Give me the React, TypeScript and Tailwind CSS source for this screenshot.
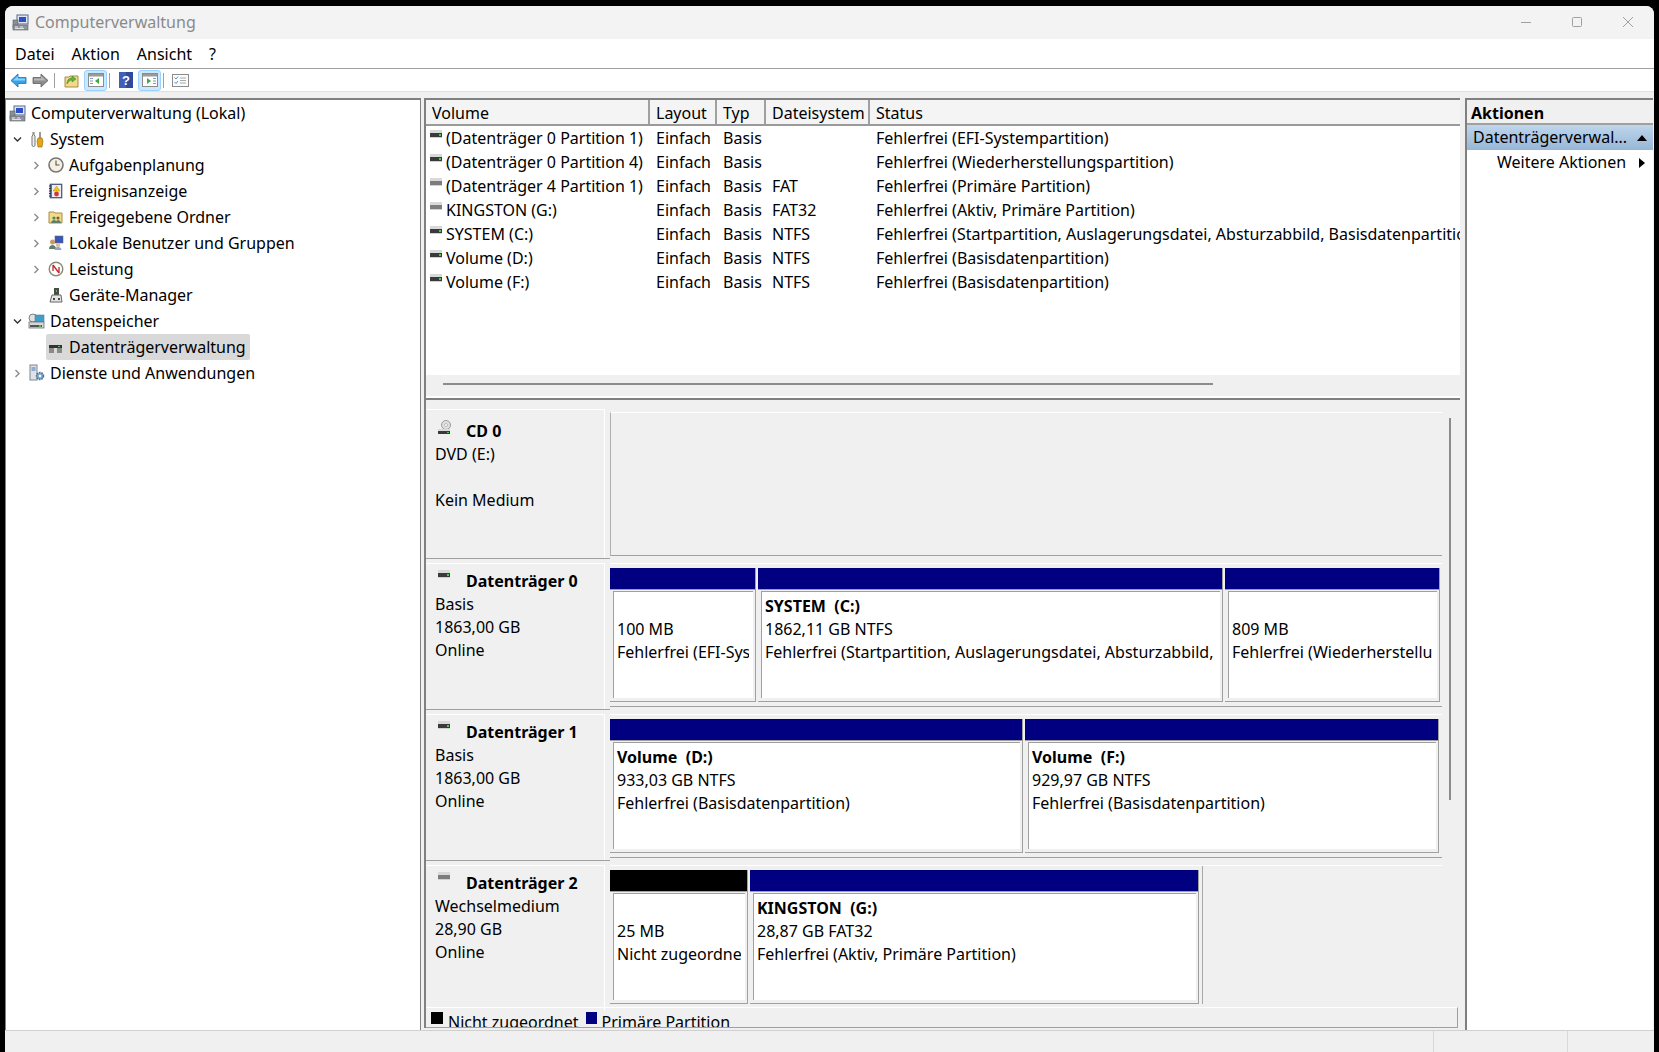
import type { ReactNode } from "react";

function Chevron({ open }: { open?: boolean }) {
  return (
    <svg width="9" height="9" viewBox="0 0 9 9" fill="none" stroke={open ? "#333" : "#8a8a8a"} strokeWidth="1.4">
      {open ? <path d="M1 2.500 4.500 6 8 2.500" /> : <path d="M2.500 1 6 4.500 2.500 8" />}
    </svg>
  );
}

function ComputerIcon() {
  return (
    <svg width="17" height="17" viewBox="0 0 17 17">
      <rect x="5" y="1" width="11" height="9" fill="#dfe6f2" stroke="#5a6a8a" />
      <rect x="7" y="3" width="7" height="5" fill="#2f4fc8" />
      <rect x="1" y="6" width="5" height="8" fill="#8a8f96" stroke="#5c6066" strokeWidth=".6" />
      <rect x="1" y="11" width="15" height="5" fill="#8f959c" stroke="#5c6066" strokeWidth=".6" />
      <path d="M3 13h3M8 13h3M3 14.600h9" stroke="#e6e8ea" />
    </svg>
  );
}
function ToolsIcon() {
  return (
    <svg width="14" height="17" viewBox="0 0 14 17">
      <path d="M3 1v3l-1 1v9a1.500 1.500 0 0 0 3 0V5L4 4V1" fill="#eef0f2" stroke="#777" />
      <rect x="9" y="1" width="2" height="6" fill="#9a9a9a" />
      <path d="M8 7h4l1 3-1 6H8l-1-6z" fill="#e5a711" stroke="#8a6510" strokeWidth=".6" />
    </svg>
  );
}
function ClockIcon() {
  return (
    <svg width="16" height="16" viewBox="0 0 16 16">
      <circle cx="8" cy="8" r="7" fill="#f5f0e2" stroke="#777" strokeWidth="1.600" />
      <path d="M8 3.500V8h3.500" fill="none" stroke="#555" strokeWidth="1.100" />
    </svg>
  );
}
function EventIcon() {
  return (
    <svg width="15" height="16" viewBox="0 0 15 16">
      <rect x="2" y="1" width="12" height="14" fill="#5a6ea0" stroke="#39456a" strokeWidth=".6" />
      <rect x="4" y="2" width="9" height="12" fill="#eceff4" />
      <path d="M8.500 3 12 8H5z" fill="#f0c419" stroke="#a8860f" strokeWidth=".4" />
      <circle cx="8.500" cy="11" r="2.400" fill="#d23a3a" />
      <path d="M1 3h2M1 5.500h2M1 8h2M1 10.500h2M1 13h2" stroke="#333" />
    </svg>
  );
}
function SharedIcon() {
  return (
    <svg width="16" height="16" viewBox="0 0 16 16">
      <path d="M1 3h5l1 1h7v10H1z" fill="#f2d98c" stroke="#a88d45" />
      <circle cx="6" cy="9" r="1.600" fill="#3f8f5a" />
      <circle cx="10" cy="9" r="1.600" fill="#8a5a2a" />
      <path d="M3 14c0-2 2-3 3-3s3 1 3 3zM8 14c0-2 1-3 2-3s3 1 3 3z" fill="#5e7f6a" />
    </svg>
  );
}
function UsersIcon() {
  return (
    <svg width="16" height="16" viewBox="0 0 16 16">
      <rect x="7" y="1" width="8" height="7" fill="#3a55b8" stroke="#667" strokeWidth=".6" />
      <circle cx="4.500" cy="7" r="2.500" fill="#c89a6a" />
      <path d="M1 14c0-3 2-4 3.500-4S8 11 8 14z" fill="#5e7f6a" />
      <circle cx="10" cy="10" r="2.200" fill="#d8c0a0" />
      <path d="M6.500 15c0-2 1.500-3 3.500-3s3.500 1 3.500 3z" fill="#8fa6c8" />
    </svg>
  );
}
function PerfIcon() {
  return (
    <svg width="16" height="16" viewBox="0 0 16 16">
      <circle cx="8" cy="8" r="6.800" fill="#fff" stroke="#8a8a7a" strokeWidth="1.400" />
      <path d="M5 4 11 12M5 4v6M11 12V6" fill="none" stroke="#c8242c" strokeWidth="1.300" />
    </svg>
  );
}
function DeviceIcon() {
  return (
    <svg width="14" height="16" viewBox="0 0 14 16">
      <rect x="5" y="1" width="5" height="7" fill="#4a4a4a" />
      <rect x="7" y="3" width="1" height="2" fill="#4fc04f" />
      <path d="M3 8h9l1 7H1z" fill="#e4e4e4" stroke="#666" />
      <path d="M4 11h2v2H4zM9 11h2v2H9z" fill="#444" />
    </svg>
  );
}
function StorageIcon() {
  return (
    <svg width="17" height="16" viewBox="0 0 17 16">
      <circle cx="5" cy="5" r="4" fill="#dfe3e6" stroke="#7a8288" />
      <rect x="7" y="2" width="9" height="7" fill="#3f9fc8" stroke="#5f7f90" strokeWidth=".6" />
      <rect x="1" y="9" width="15" height="6" fill="#d5d8da" stroke="#6a7074" strokeWidth=".8" />
      <rect x="2" y="12" width="12" height="2" fill="#555" />
      <rect x="11" y="12" width="2" height="2" fill="#4fc04f" />
    </svg>
  );
}
function DiskMgmtIcon() {
  return (
    <svg width="15" height="13" viewBox="0 0 15 13">
      <rect x="1" y="1" width="13" height="3" fill="#d8d8d8" />
      <rect x="1" y="4" width="13" height="3" fill="#333" />
      <rect x="10" y="5" width="2" height="1" fill="#55d055" />
      <rect x="1" y="7" width="5" height="5" fill="#8a8a8a" />
      <rect x="9" y="7" width="5" height="5" fill="#8a8a8a" />
    </svg>
  );
}
function ServicesIcon() {
  return (
    <svg width="16" height="18" viewBox="0 0 16 18">
      <rect x="1" y="1" width="7" height="15" fill="#dfe3e8" stroke="#7c8694" />
      <path d="M2.500 4h4M2.500 6h4" stroke="#3f73b8" />
      <circle cx="11" cy="12" r="3.500" fill="#7fa8d0" stroke="#4c6f96" strokeWidth="1.500" strokeDasharray="1.500 1" />
      <circle cx="11" cy="12" r="1.200" fill="#fff" />
    </svg>
  );
}

function DiskIcon({ online = true }: { online?: boolean }) {
  return (
    <svg width="14" height="9" viewBox="0 0 14 9" className="shrink-0">
      <rect x="1" y="0" width="12" height="3" fill="#d9d9d9" />
      <rect x="1" y="3" width="12" height="4" fill={online ? "#3a3a3a" : "#7d7d7d"} />
      {online && <rect x="10" y="4" width="2" height="2" fill="#43d043" />}
      <rect x="1" y="7" width="12" height="1" fill="#d0d0d0" />
    </svg>
  );
}

function CdIcon() {
  return (
    <svg width="15" height="16" viewBox="0 0 15 16">
      <circle cx="9" cy="5" r="4.500" fill="#e0e0e0" stroke="#9a9a9a" />
      <circle cx="9" cy="5" r="1.500" fill="#fff" stroke="#999" strokeWidth=".6" />
      <rect x="1" y="9" width="12" height="2" fill="#d9d9d9" />
      <rect x="1" y="11" width="12" height="3" fill="#3a3a3a" />
      <rect x="10" y="12" width="2" height="1" fill="#43d043" />
    </svg>
  );
}

function BackArrow() {
  return (
    <svg width="17" height="15" viewBox="0 0 17 15">
      <path d="M8 1 1 7.500 8 14v-3.500h8v-6H8z" fill="#35a3e8" stroke="#1e6fb0" strokeWidth=".8" />
      <path d="M8 3 3 7.500h12V5.500H8z" fill="#8fd2f8" />
    </svg>
  );
}
function ForwardArrow() {
  return (
    <svg width="17" height="15" viewBox="0 0 17 15">
      <path d="M9 1l7 6.500L9 14v-3.500H1v-6h8z" fill="#8c8c8c" stroke="#5f5f5f" strokeWidth=".8" />
      <path d="M9 3l5 4.500H2V5.500h7z" fill="#b8b8b8" />
    </svg>
  );
}
function FolderUp() {
  return (
    <svg width="15" height="15" viewBox="0 0 15 15">
      <path d="M1 4h4l1-1h8v11H1z" fill="#f2d98c" stroke="#a88d45" />
      <path d="M3 11c0-4 2-6 5-6V3l4 3-4 3V7C6 7 5 8 3 11z" fill="#5cb83a" stroke="#35801f" strokeWidth=".5" />
    </svg>
  );
}
function PaneIcon({ arrow }: { arrow: "left" | "right" }) {
  return (
    <svg width="16" height="14" viewBox="0 0 16 14">
      <rect x=".5" y=".5" width="15" height="13" fill="#fff" stroke="#8c8c8c" />
      <rect x="1" y="1" width="14" height="2.500" fill="#9a9a9a" />
      {arrow === "left" ? (
        <>
          <path d="M2 5.500h3M2 8h3M2 10.500h3" stroke="#7c9cc0" />
          <path d="M11 5v6L7 8z" fill="#3fa83f" />
        </>
      ) : (
        <>
          <path d="M11 5.500h3M11 8h3M11 10.500h3" stroke="#7c9cc0" />
          <path d="M5 5v6l4-3z" fill="#3fa83f" />
        </>
      )}
    </svg>
  );
}
function HelpIcon() {
  return (
    <svg width="14" height="16" viewBox="0 0 14 16">
      <rect width="14" height="16" fill="#2f4a9c" />
      <rect width="7" height="16" fill="#3f5fb8" />
      <text x="7" y="13" textAnchor="middle" fontSize="13" fontWeight="700" fill="#fff" fontFamily="Liberation Sans, sans-serif">?</text>
    </svg>
  );
}
function ListIcon() {
  return (
    <svg width="17" height="13" viewBox="0 0 17 13">
      <rect x=".5" y=".5" width="16" height="12" fill="#fbfbfb" stroke="#8c8c8c" />
      <path d="M2.500 3.500 4 5l2-2.500M2.500 8 4 9.500 6 7" fill="none" stroke="#5f8fc0" />
      <path d="M8 4h6M8 6.500h6M8 9h6" stroke="#aaa" />
    </svg>
  );
}

function TreeRow({ level, chev, icon, label, selected }: { level: 0 | 1 | 2; chev?: "open" | "closed"; icon: ReactNode; label: string; selected?: boolean }) {
  return (
    <div className={`flex h-[26px] items-center ${level === 0 ? "pl-[2px]" : level === 1 ? "pl-[2px]" : "pl-[21px]"}`}>
      {level > 0 && (
        <span className="flex w-[19px] shrink-0 justify-center">
          {chev && <Chevron open={chev === "open"} />}
        </span>
      )}
      <span className={`flex h-[26px] items-center rounded-[2px] pr-[4px] ${selected ? "bg-[#d9d9d9]" : ""}`}>
        <span className="flex w-[19px] shrink-0 items-center justify-center">{icon}</span>
        <span className="ml-[4px] whitespace-nowrap">{label}</span>
      </span>
    </div>
  );
}

const columns = ["w-[224px]", "w-[67px]", "w-[49px]", "w-[104px]"];

const volumes = [
  { name: "(Datenträger 0 Partition 1)", fs: "", status: "Fehlerfrei (EFI-Systempartition)", online: true },
  { name: "(Datenträger 0 Partition 4)", fs: "", status: "Fehlerfrei (Wiederherstellungspartition)", online: true },
  { name: "(Datenträger 4 Partition 1)", fs: "FAT", status: "Fehlerfrei (Primäre Partition)", online: false },
  { name: "KINGSTON (G:)", fs: "FAT32", status: "Fehlerfrei (Aktiv, Primäre Partition)", online: false },
  { name: "SYSTEM (C:)", fs: "NTFS", status: "Fehlerfrei (Startpartition, Auslagerungsdatei, Absturzabbild, Basisdatenpartition)", online: true },
  { name: "Volume (D:)", fs: "NTFS", status: "Fehlerfrei (Basisdatenpartition)", online: true },
  { name: "Volume (F:)", fs: "NTFS", status: "Fehlerfrei (Basisdatenpartition)", online: true },
];

function Partition({ width, title, size, status, unallocated }: { width: string; title?: string; size: string; status: string; unallocated?: boolean }) {
  return (
    <div className={`${width} mr-[2px] flex h-[134px] shrink-0 flex-col border-r border-b border-[#a0a0a0]`}>
      <div className={`h-[21px] shrink-0 ${unallocated ? "bg-black" : "bg-[#000080]"}`} />
      <div className="h-[2px] shrink-0 border-t border-[#a0a0a0]" />
      <div className="mr-[2px] ml-[3px] h-[107px] shrink-0 overflow-hidden border-t border-l border-[#a0a0a0] bg-white pt-[3px] pr-[4px] pl-[3px] leading-[23px]">
        <div className="h-[23px] font-bold whitespace-pre">{title}</div>
        <div className="h-[23px] whitespace-nowrap">{size}</div>
        <div className="h-[23px] overflow-hidden whitespace-nowrap">{status}</div>
      </div>
    </div>
  );
}

function DiskRow({ height, name, icon, lines, top, children, noLine }: { height: string; name: string; icon: ReactNode; lines: string[]; top?: boolean; children: ReactNode; noLine?: boolean }) {
  return (
    <div className={`flex ${height} shrink-0`}>
      <div className={`w-[184px] shrink-0 ${noLine ? "" : "border-b border-[#a0a0a0]"}`}>
        <div className={`border-t border-r border-white ${top ? "mt-[9px] mr-[5px] h-[149px] pt-[10px]" : "mt-[4px] mr-[5px] h-[146px] pt-[6px]"}`}>
          <div className="flex h-[23px] items-start">
            <span className="ml-[11px] flex w-[29px] shrink-0 items-start">{icon}</span>
            <span className="h-[23px] font-bold">{name}</span>
          </div>
          {lines.map((l, i) => (
            <div key={i} className="h-[23px] pl-[9px] whitespace-nowrap">{l}</div>
          ))}
        </div>
      </div>
      <div className={`mb-[3px] w-[832px] shrink-0 ${noLine ? "" : "border-b border-[#a0a0a0]"}`}>
        <div className={`border-t border-white pt-[4px] ${top ? "mt-[12px] h-[144px] border-l border-l-[#b0b0b0]" : "mt-[4px]"}`}>
          {children}
        </div>
      </div>
    </div>
  );
}

export default function App() {
  return (
    <div className="h-[1052px] w-[1659px] overflow-hidden bg-black pt-[6px] pr-[5px] pl-[5px] font-['Noto_Sans',sans-serif] text-[16px] leading-[23px] text-black">
      <div className="flex h-full flex-col overflow-hidden rounded-t-[8px] bg-[#f0f0f0]">
        {/* title bar */}
        <div className="flex h-[33px] shrink-0 items-center bg-[#f3f3f3] pl-[7px] text-[#8a8a8a]">
          <ComputerIcon />
          <span className="ml-[6px]">Computerverwaltung</span>
          <div className="mb-[1px] ml-auto flex items-center">
            <svg width="12" height="12" viewBox="0 0 12 12" className="mr-[39px]"><path d="M1 6.500h10" stroke="#a0a0a0" /></svg>
            <svg width="12" height="12" viewBox="0 0 12 12" className="mr-[39px]"><rect x="1.500" y="1.500" width="9" height="9" rx="1" fill="none" stroke="#a0a0a0" /></svg>
            <svg width="12" height="12" viewBox="0 0 12 12" className="mr-[20px]"><path d="M1 1l10 10M11 1 1 11" stroke="#a0a0a0" /></svg>
          </div>
        </div>
        {/* menu */}
        <div className="flex h-[30px] shrink-0 items-center gap-[17px] border-b border-[#a0a0a0] bg-white pt-[2px] pl-[10px]">
          <span>Datei</span>
          <span>Aktion</span>
          <span>Ansicht</span>
          <span>?</span>
        </div>
        {/* toolbar */}
        <div className="flex h-[23px] shrink-0 items-center border-b border-[#e0e0e0] bg-white pl-[5px]">
          <BackArrow />
          <span className="ml-[5px]"><ForwardArrow /></span>
          <span className="mx-[5px] h-[15px] w-px bg-[#a0a0a0]" />
          <span className="ml-[4px]"><FolderUp /></span>
          <span className="ml-[5px] flex h-[21px] w-[23px] items-center justify-center rounded-[3px] border border-[#99d1ff] bg-[#cce8ff]"><PaneIcon arrow="left" /></span>
          <span className="mx-[2px] h-[15px] w-px bg-[#a0a0a0]" />
          <span className="ml-[7px]"><HelpIcon /></span>
          <span className="ml-[5px] flex h-[21px] w-[23px] items-center justify-center rounded-[3px] border border-[#99d1ff] bg-[#cce8ff]"><PaneIcon arrow="right" /></span>
          <span className="mx-[2px] h-[15px] w-px bg-[#a0a0a0]" />
          <span className="ml-[6px]"><ListIcon /></span>
        </div>
        {/* panes */}
        <div className="mt-[6px] flex min-h-0 flex-1 items-start">
          {/* tree */}
          <div className="h-[932px] w-[416px] shrink-0 border-t-2 border-r border-l border-[#808080] bg-white">
            <TreeRow level={0} icon={<ComputerIcon />} label="Computerverwaltung (Lokal)" />
            <TreeRow level={1} chev="open" icon={<ToolsIcon />} label="System" />
            <TreeRow level={2} chev="closed" icon={<ClockIcon />} label="Aufgabenplanung" />
            <TreeRow level={2} chev="closed" icon={<EventIcon />} label="Ereignisanzeige" />
            <TreeRow level={2} chev="closed" icon={<SharedIcon />} label="Freigegebene Ordner" />
            <TreeRow level={2} chev="closed" icon={<UsersIcon />} label="Lokale Benutzer und Gruppen" />
            <TreeRow level={2} chev="closed" icon={<PerfIcon />} label="Leistung" />
            <TreeRow level={2} icon={<DeviceIcon />} label="Geräte-Manager" />
            <TreeRow level={1} chev="open" icon={<StorageIcon />} label="Datenspeicher" />
            <TreeRow level={2} icon={<DiskMgmtIcon />} label="Datenträgerverwaltung" selected />
            <TreeRow level={1} chev="closed" icon={<ServicesIcon />} label="Dienste und Anwendungen" />
          </div>
          {/* middle */}
          <div className="ml-[3px] flex h-[930px] w-[1036px] shrink-0 flex-col border-l-2 border-[#808080]">
            {/* volume list */}
            <div className="h-[302px] shrink-0 border-t-2 border-b-2 border-[#808080] bg-white">
              <div className="flex h-[26px] border-b-2 border-[#9a9a9a] bg-[#f4f4f4]">
                {["Volume", "Layout", "Typ", "Dateisystem"].map((h, i) => (
                  <div key={h} className={`${columns[i]} shrink-0 border-r-2 border-[#a0a0a0] pl-[6px] leading-[27px]`}>{h}</div>
                ))}
                <div className="pl-[6px] leading-[27px]">Status</div>
              </div>
              <div className="h-[249px] overflow-hidden">
                {volumes.map((v) => (
                  <div key={v.name} className="flex h-[24px] items-center">
                    <div className={`${columns[0]} flex shrink-0 items-center pl-[3px] whitespace-nowrap`}>
                      <span className="mr-[3px] -mt-[7px]"><DiskIcon online={v.online} /></span>
                      {v.name}
                    </div>
                    <div className={`${columns[1]} shrink-0 pl-[6px]`}>Einfach</div>
                    <div className={`${columns[2]} shrink-0 pl-[6px]`}>Basis</div>
                    <div className={`${columns[3]} shrink-0 pl-[6px]`}>{v.fs}</div>
                    <div className="min-w-0 flex-1 overflow-hidden pl-[6px] whitespace-nowrap">{v.status}</div>
                  </div>
                ))}
              </div>
              <div className="flex h-[21px] items-start bg-[#f0f0f0] pt-[8px] pl-[17px]">
                <div className="h-[2px] w-[770px] bg-[#8c8c8c]" />
              </div>
            </div>
            {/* graphical view */}
            <div className="flex min-h-0 flex-1 flex-col">
              <div className="flex min-h-0 flex-1">
                <div className="flex min-w-0 flex-col">
                  <DiskRow height="h-[159px]" top name="CD 0" icon={<CdIcon />} lines={["DVD (E:)", "", "Kein Medium"]}>
                    <div />
                  </DiskRow>
                  <DiskRow height="h-[151px]" name="Datenträger 0" icon={<DiskIcon />} lines={["Basis", "1863,00 GB", "Online"]}>
                    <div className="flex">
                      <Partition width="w-[146px]" size="100 MB" status="Fehlerfrei (EFI-Systempartition)" />
                      <Partition width="w-[465px]" title="SYSTEM  (C:)" size="1862,11 GB NTFS" status="Fehlerfrei (Startpartition, Auslagerungsdatei, Absturzabbild, Basisdatenpartition)" />
                      <Partition width="w-[215px]" size="809 MB" status="Fehlerfrei (Wiederherstellungspartition)" />
                    </div>
                  </DiskRow>
                  <DiskRow height="h-[151px]" name="Datenträger 1" icon={<DiskIcon />} lines={["Basis", "1863,00 GB", "Online"]}>
                    <div className="flex">
                      <Partition width="w-[413px]" title="Volume  (D:)" size="933,03 GB NTFS" status="Fehlerfrei (Basisdatenpartition)" />
                      <Partition width="w-[414px]" title="Volume  (F:)" size="929,97 GB NTFS" status="Fehlerfrei (Basisdatenpartition)" />
                    </div>
                  </DiskRow>
                  <DiskRow height="h-[147px]" noLine name="Datenträger 2" icon={<DiskIcon online={false} />} lines={["Wechselmedium", "28,90 GB", "Online"]}>
                    <div className="-mt-[4px] flex w-fit border-r border-[#a8a8a8] pt-[4px] pr-[1px]">
                      <Partition width="w-[138px]" size="25 MB" status="Nicht zugeordnet" unallocated />
                      <Partition width="w-[449px]" title="KINGSTON  (G:)" size="28,87 GB FAT32" status="Fehlerfrei (Aktiv, Primäre Partition)" />
                    </div>
                  </DiskRow>
                </div>
                <div className="flex w-[16px] shrink-0 justify-center pt-[18px]">
                  <div className="h-[382px] w-[2px] bg-[#8c8c8c]" />
                </div>
              </div>
              {/* legend */}
              <div className="mr-[2px] flex h-[21px] shrink-0 items-start overflow-hidden border-t border-r border-b border-t-white border-r-[#a0a0a0] border-b-[#a0a0a0] pt-[3px] pl-[5px]">
                <span className="mt-[1px] mr-[5px] h-[12px] w-[12px] shrink-0 bg-black" />
                <span className="whitespace-nowrap">Nicht zugeordnet</span>
                <span className="mt-[1px] mr-[5px] ml-[7px] h-[12px] w-[11px] shrink-0 bg-[#000080]" />
                <span className="whitespace-nowrap">Primäre Partition</span>
              </div>
            </div>
          </div>
          {/* actions */}
          <div className="ml-[5px] h-[932px] w-[188px] shrink-0 border-t-2 border-l-2 border-[#808080] bg-white">
            <div className="h-[25px] border-b-2 border-[#a0a0a0] bg-[#f0f0f0] pl-[4px] leading-[27px] font-bold">Aktionen</div>
            <div className="flex h-[25px] items-center bg-gradient-to-b from-[#bfd6ec] to-[#97b6d6] pl-[6px]">
              <span className="whitespace-nowrap">Datenträgerverwal...</span>
              <svg width="10" height="6" viewBox="0 0 10 6" className="mr-[6px] ml-auto"><path d="M5 0l5 6H0z" fill="#000" /></svg>
            </div>
            <div className="flex h-[25px] items-center pl-[30px]">
              <span className="whitespace-nowrap">Weitere Aktionen</span>
              <svg width="6" height="10" viewBox="0 0 6 10" className="mr-[8px] ml-auto"><path d="M0 0l6 5-6 5z" fill="#000" /></svg>
            </div>
          </div>
        </div>
        {/* status bar */}
        <div className="flex h-[22px] shrink-0 justify-end border-t border-[#d0d0d0]">
          <div className="w-[134px] border-l border-[#d8d8d8]" />
          <div className="w-[87px] border-l border-[#d8d8d8]" />
        </div>
      </div>
    </div>
  );
}
